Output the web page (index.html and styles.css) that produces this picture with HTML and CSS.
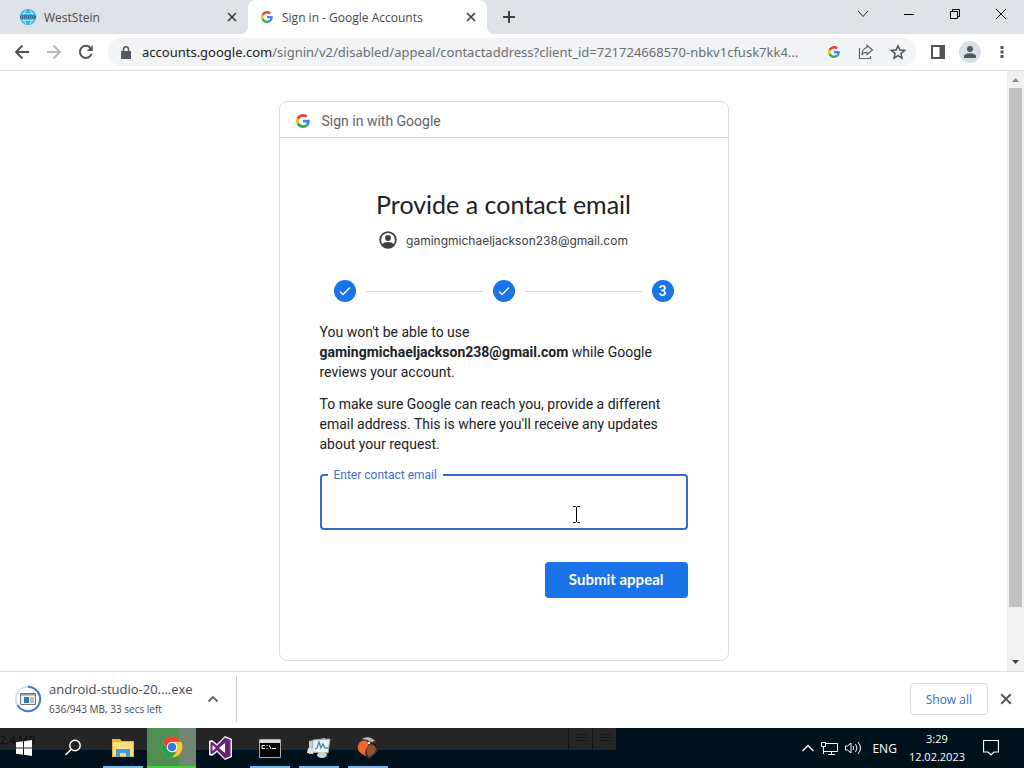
FILE: index.html
```html
<!DOCTYPE html>
<html lang="en">

<head>
  <meta charset="UTF-8">
  <meta name="viewport" content="width=device-width, initial-scale=1.0">
  <title>Sign in - Google Accounts</title>
  <link rel="stylesheet" href="styles.css">
</head>

<body>
  <svg class="defs" aria-hidden="true">
    <symbol id="google" viewBox="0 0 48 48">
      <path fill="#ea4335" d="M24 9.5c3.54 0 6.71 1.22 9.21 3.6l6.85-6.85C35.9 2.38 30.47 0 24 0 14.62 0 6.51 5.38 2.56 13.22l7.98 6.19C12.43 13.72 17.74 9.5 24 9.5z" />
      <path fill="#4285f4" d="M46.98 24.55c0-1.57-.15-3.09-.38-4.55H24v9.02h12.94c-.58 2.96-2.26 5.48-4.78 7.18l7.73 6c4.51-4.18 7.09-10.36 7.09-17.65z" />
      <path fill="#fbbc05" d="M10.53 28.59c-.48-1.45-.76-2.99-.76-4.59s.27-3.14.76-4.59l-7.98-6.19C.92 16.46 0 20.12 0 24c0 3.88.92 7.54 2.56 10.78l7.97-6.19z" />
      <path fill="#34a853" d="M24 48c6.48 0 11.93-2.13 15.89-5.81l-7.73-6c-2.15 1.45-4.92 2.3-8.16 2.3-6.26 0-11.57-4.22-13.47-9.91l-7.98 6.19C6.51 42.62 14.62 48 24 48z" />
    </symbol>
    <symbol id="cross" viewBox="0 0 10 10">
      <path d="M1 1l8 8M9 1L1 9" fill="none" stroke="currentColor" stroke-width="1.7" />
    </symbol>
    <symbol id="check" viewBox="0 0 12 12">
      <path d="M1 6.5l3 3L11 2.5" fill="none" stroke="#fff" stroke-width="1.3" />
    </symbol>
  </svg>

  <header class="tabs">
    <div class="tab">
      <svg class="tab-icon" viewBox="0 0 16 16">
        <circle cx="8" cy="8" r="8" fill="#2fb4ea" />
        <path d="M2.500 4Q8 5.500 13.500 4M2.500 12Q8 10.500 13.500 12M6 1L3.500 5.500M10 1l2.500 4.500M6 15l-2.500-4.500M10 15l2.500-4.500" fill="none" stroke="#b5e6f8" stroke-width="1.200" />
        <path d="M0 6.500h16v3H0z" fill="#2d6680" />
        <path d="M1 8h14" stroke="#a9cfdf" stroke-width="1" stroke-dasharray="1 1" />
      </svg>
      <span class="tab-title">WestStein</span>
      <button class="tab-close" aria-label="Close tab"><svg width="10" height="10"><use href="#cross" /></svg></button>
    </div>
    <div class="tab active">
      <svg class="tab-icon small"><use href="#google" /></svg>
      <span class="tab-title">Sign in - Google Accounts</span>
      <button class="tab-close" aria-label="Close tab"><svg width="10" height="10"><use href="#cross" /></svg></button>
    </div>
    <button class="new-tab" aria-label="New tab">
      <svg width="12" height="12" viewBox="0 0 12 12"><path d="M6 0v12M0 6h12" stroke="#3c4043" stroke-width="2" /></svg>
    </button>
    <div class="window-buttons">
      <button aria-label="Search tabs"><svg width="12" height="12" viewBox="0 0 12 12"><path d="M1 3l5 5.500L11 3" fill="none" stroke="#222" /></svg></button>
      <button aria-label="Minimize"><svg width="10" height="10" viewBox="0 0 10 10"><path d="M0 5.500h10" stroke="#000" /></svg></button>
      <button aria-label="Restore"><svg width="10" height="10" viewBox="0 0 10 10"><path d="M.5 2.500h7v7h-7zM2.500 2.500v-2h7v7h-2" fill="none" stroke="#000" /></svg></button>
      <button aria-label="Close"><svg width="10" height="10" viewBox="0 0 10 10"><path d="M0 0l10 10M10 0L0 10" stroke="#000" /></svg></button>
    </div>
  </header>

  <nav class="toolbar">
    <button class="nav-button" aria-label="Back"><svg width="16" height="16" viewBox="0 0 16 16"><path d="M15 8H2M8.500 1.500L2 8l6.500 6.500" fill="none" stroke="#505357" stroke-width="2" /></svg></button>
    <button class="nav-button" aria-label="Forward"><svg width="16" height="16" viewBox="0 0 16 16"><path d="M1 8h13M7.500 1.500L14 8l-6.500 6.500" fill="none" stroke="#b6b8bb" stroke-width="2" /></svg></button>
    <button class="nav-button" aria-label="Reload"><svg width="16" height="16" viewBox="0 0 16 16"><path d="M13.500 10A6 6 0 1 1 12.300 3.800" fill="none" stroke="#505357" stroke-width="2" /><path d="M14.800 1v6h-6z" fill="#505357" /></svg></button>
    <div class="address">
      <svg width="10" height="13" viewBox="0 0 10 13"><path d="M0 5h10v8H0z" fill="#55585c" /><path d="M2.500 5V3.200a2.500 2.500 0 0 1 5 0V5" fill="none" stroke="#55585c" stroke-width="1.500" /></svg>
      <div class="url"><span class="host">accounts.google.com</span>/signin/v2/disabled/appeal/contactaddress?client_id=721724668570-nbkv1cfusk7kk4...</div>
      <svg class="address-google" width="12" height="12"><use href="#google" /></svg>
      <button aria-label="Share"><svg width="16" height="16" viewBox="0 0 16 16"><path d="M1.500 4v10.500h11V12M9 3.500V1.300l5.500 4.700L9 10.500V8.300C6.500 8.200 5 9 3.800 11 4.200 7 6 4 9 3.500z" fill="none" stroke="#5f6368" stroke-width="1.200" /></svg></button>
      <button aria-label="Bookmark"><svg width="16" height="16" viewBox="0 0 16 16"><path d="M8 1.800l1.800 4.300 4.700.4-3.600 3.100 1.100 4.600L8 11.700l-4 2.500 1.100-4.600L1.500 6.500l4.700-.4z" fill="none" stroke="#505357" stroke-width="1.500" /></svg></button>
    </div>
    <button class="panel-button" aria-label="Side panel"><svg width="14" height="14" viewBox="0 0 14 14"><path d="M1 1h12v12H1z" fill="none" stroke="#505357" stroke-width="2" /><path d="M8.500 1H13v12H8.500z" fill="#505357" /></svg></button>
    <button class="avatar" aria-label="Profile"><svg width="14" height="14" viewBox="0 0 14 14"><circle cx="7" cy="4" r="3" fill="#505861" /><path d="M1 13v-1.500C1 9 5 8.300 7 8.300s6 .7 6 3.200V13z" fill="#505861" /></svg></button>
    <button class="menu-button" aria-label="Menu"><svg width="4" height="14" viewBox="0 0 4 14"><path d="M.5 1h3v3h-3zM.5 5.500h3v3h-3zM.5 10h3v3h-3z" fill="#505357" /></svg></button>
  </nav>

  <div class="viewport">
    <main class="page">
      <section class="card">
        <div class="card-top">
          <svg width="14" height="14"><use href="#google" /></svg>
          <span>Sign in with Google</span>
        </div>
        <form class="card-body">
          <h1>Provide a contact email</h1>
          <div class="account">
            <svg width="18" height="18" viewBox="0 0 18 18"><circle cx="9" cy="9" r="7.800" fill="none" stroke="#3c4043" stroke-width="1.800" /><circle cx="9" cy="7" r="2.900" fill="#3c4043" /><path d="M3 13.500c2-3.300 10-3.300 12 0C13 17.700 5 17.700 3 13.500z" fill="#3c4043" /></svg>
            <span>gamingmichaeljackson238@gmail.com</span>
          </div>
          <div class="steps">
            <span class="step"><svg width="12" height="12"><use href="#check" /></svg></span>
            <span class="step-line"></span>
            <span class="step"><svg width="12" height="12"><use href="#check" /></svg></span>
            <span class="step-line"></span>
            <span class="step">3</span>
          </div>
          <p>You won't be able to use <b>gamingmichaeljackson238@gmail.com</b> while Google reviews your account.</p>
          <p>To make sure Google can reach you, provide a different email address. This is where you'll receive any updates about your request.</p>
          <div class="field">
            <input type="email" id="contact">
            <label for="contact">Enter contact email</label>
            <svg class="pointer" width="9" height="17" viewBox="0 0 9 17"><path d="M1 .5h2.500l1 1 1-1H8M4.500 1v15M1 16.500h2.500l1-1 1 1H8" fill="none" stroke="#000" /></svg>
          </div>
          <button type="button" class="submit">Submit appeal</button>
        </form>
      </section>
    </main>
    <div class="scrollbar">
      <svg width="7" height="4" viewBox="0 0 7 4"><path d="M0 4L3.500 0 7 4z" fill="#8b8b8b" /></svg>
      <div class="thumb"></div>
      <svg width="7" height="4" viewBox="0 0 7 4"><path d="M0 0h7L3.500 4z" fill="#444" /></svg>
    </div>
  </div>

  <section class="downloads">
    <div class="download">
      <svg width="28" height="28" viewBox="0 0 28 28">
        <circle cx="14" cy="14" r="12.200" fill="none" stroke="#d5e2f7" stroke-width="2" />
        <path d="M14 1.800A12.200 12.200 0 1 1 3.400 20" fill="none" stroke="#3b78d8" stroke-width="2" />
        <path d="M6.500 8.500h15v11h-15z" fill="#f2f2f2" stroke="#777" />
        <path d="M7 9h14v1.500H7z" fill="#999" />
        <path d="M10 12h5v6h-5z" fill="#2878bb" />
        <path d="M16 13h4M16 15h4M16 17h4" stroke="#888" />
      </svg>
      <div class="download-text">
        <div class="file">android-studio-20....exe</div>
        <div class="progress">636/943 MB, 33 secs left</div>
      </div>
      <button class="download-menu" aria-label="Download options"><svg width="12" height="8" viewBox="0 0 12 8"><path d="M1.500 6.500L6 2l4.500 4.500" fill="none" stroke="#5f6368" stroke-width="1.800" /></svg></button>
    </div>
    <button class="show-all">Show all</button>
    <button class="shelf-close" aria-label="Close downloads"><svg width="12" height="12"><use href="#cross" /></svg></button>
  </section>

  <footer class="taskbar">
    <div class="ghost"><span>2,4 MB</span><i></i><i></i></div>
    <button class="task plain" aria-label="Start"><svg width="16" height="16" viewBox="0 0 16 16"><path d="M0 2.300L7 1.300v6.200H0zM8 1.200L16 0v7.500H8zM0 8.500h7v6.200l-7-1zM8 8.500h8V16l-8-1.200z" fill="#fff" /></svg></button>
    <button class="task plain" aria-label="Search"><svg width="18" height="18" viewBox="0 0 18 18"><circle cx="11" cy="6.500" r="5.200" fill="none" stroke="#fff" stroke-width="1.400" /><path d="M7.300 10.300L1.500 16" stroke="#fff" stroke-width="1.500" /></svg></button>
    <button class="task open" aria-label="File Explorer"><svg width="22" height="20" viewBox="0 0 22 20"><path d="M0 1h8l2 2h12v16H0z" fill="#e9b63b" /><path d="M1 4h20v14H1z" fill="#ffdc7a" /><path d="M4 19V11h14v8h-4v-4H8v4z" fill="#3f9bdc" /><path d="M7 9h8v2H7z" fill="#ffe9a8" /></svg></button>
    <button class="task current" aria-label="Chrome"><svg width="22" height="22" viewBox="0 0 22 22"><circle cx="11" cy="11" r="10.500" fill="#fcc934" /><path d="M1.900 5.750A10.500 10.500 0 0 1 20.100 5.750H11L6.450 13.600z" fill="#ea4335" /><path d="M1.900 5.750L6.450 13.600 11 16.250h4.500L11 21.500A10.500 10.500 0 0 1 1.900 5.750z" fill="#2c9d4b" /><circle cx="11" cy="11" r="5.300" fill="#fff" /><circle cx="11" cy="11" r="4.300" fill="#3578e5" /></svg></button>
    <button class="task" aria-label="Visual Studio"><svg width="25" height="24" viewBox="0 0 25 24"><path d="M17 0l7 3v18l-7 3-8-8-5 4-3-1V5l3-1 5 4z" fill="#fff" /><path d="M17 1.500l5.500 2.300v16.400L17 22.500l-8-8.300-5 4-1.500-.8V6.600L4 5.800l5 4z" fill="#68217a" /><path d="M17 7v10l-6-5zM4.500 9v6L7.700 12z" fill="#fff" /></svg></button>
    <button class="task open" aria-label="Command Prompt"><svg width="22" height="19" viewBox="0 0 22 19"><path d="M.5.5h21v18H.5z" fill="#050505" stroke="#aaa" /><path d="M1 1h20v3H1z" fill="#ddd" /><path d="M6 6.500H3v3h3M8 6v1M8 9v1M10 6l2 4M13 9.500h4" fill="none" stroke="#fff" /></svg></button>
    <button class="task open" aria-label="Monitor"><svg width="24" height="22" viewBox="0 0 24 22"><path d="M2 4l16-3v13L2 17z" fill="#c4cccd" /><path d="M6 3l17-1-2 14-16-1z" fill="#edf3f4" stroke="#9daaac" /><path d="M8 12l2-1 2-6 2 6 2-4 2 4h3" fill="none" stroke="#438ba4" stroke-width="1.300" /><ellipse cx="15" cy="18" rx="5" ry="3" fill="#ccd6d0" /><path d="M1 11l6 1-1 5-6-1z" fill="#dfe5e5" /></svg></button>
    <button class="task open" aria-label="Bird"><svg width="22" height="24" viewBox="0 0 22 24"><path d="M1 9C2 3 7 0 12 1c6 1 9 6 9 11 0 4-3 6-5 8l-4 3-5-4C3 17 0 14 1 9z" fill="#39302d" /><path d="M1 10C2 5 6 4 9 5c4 2 2 5 0 8-1 2-1 4 0 7C4 18 0 15 1 10z" fill="#f0682c" /><path d="M5 3c4-3 10-2 13 2l-4 1-4-2z" fill="#b9b4ac" /><path d="M11 10c3-3 8-1 8 3 0 3-3 5-7 8-3-4-3-8-1-11z" fill="#8c5334" /><path d="M14 7l5 1 1 4-3-3z" fill="#151210" /><circle cx="12" cy="7" r="1.200" fill="#e8e2d8" /></svg></button>
    <div class="tray">
      <svg width="12" height="8" viewBox="0 0 12 8"><path d="M.5 7L6 1.500 11.500 7" fill="none" stroke="#fff" stroke-width="1.300" /></svg>
      <svg width="17" height="14" viewBox="0 0 17 14"><path d="M5 2.500h11.500v8H4M2.500 6v7M2.500 10.500H5M7 13.500h7M10.500 10.500v3M.5 1.500h4v4h-4z" fill="none" stroke="#fff" /></svg>
      <svg width="17" height="14" viewBox="0 0 17 14"><path d="M.5 5h2L6 2v10L2.500 9h-2zM8 5q1.500 2 0 4M10.500 3q3 4 0 8M13 1q5 6 0 12" fill="none" stroke="#fff" /></svg>
      <span>ENG</span>
      <div class="clock"><div>3:29</div><div>12.02.2023</div></div>
      <svg width="16" height="16" viewBox="0 0 16 16"><path d="M.5.500h15v11.500H11l-3 3-3-3H.5z" fill="none" stroke="#fff" stroke-width="1.200" /></svg>
    </div>
  </footer>
</body>

</html>
```
FILE: styles.css
```css
* {
  box-sizing: border-box;
}

body {
  margin: 0;
  height: 100vh;
  display: flex;
  flex-direction: column;
  overflow: hidden;
  background: #fff;
  color: #202124;
  font-family: "Open Sans", sans-serif;
  font-size: 12px;
}

button {
  display: flex;
  align-items: center;
  justify-content: center;
  padding: 0;
  border: 0;
  background: none;
  color: #3c4043;
  font-family: inherit;
}

svg {
  flex-shrink: 0;
}

.defs {
  position: absolute;
  width: 0;
  height: 0;
}

/* tab strip */
.tabs {
  display: flex;
  flex-shrink: 0;
  height: 34px;
  background: #dee1e6;
}

.tab {
  display: flex;
  align-items: center;
  width: 248px;
  padding: 0 10px 0 20px;
  gap: 8px;
  color: #45484c;
}

.tab.active {
  position: relative;
  width: 239px;
  padding-left: 12px;
  background: #fff;
  border-radius: 8px 8px 0 0;
}

.tab.active::before,
.tab.active::after {
  content: "";
  position: absolute;
  bottom: 0;
  width: 8px;
  height: 8px;
}

.tab.active::before {
  left: -8px;
  background: radial-gradient(circle at 0 0, transparent 8px, #fff 8px);
}

.tab.active::after {
  right: -8px;
  background: radial-gradient(circle at 100% 0, transparent 8px, #fff 8px);
}

.tab-icon {
  width: 16px;
  height: 16px;
}

.tab-icon.small {
  width: 14px;
  height: 12px;
}

.tab-title {
  flex: 1;
}

.tab-close {
  width: 12px;
}

.new-tab {
  width: 44px;
}

.window-buttons {
  display: flex;
  height: 28px;
  margin-left: auto;
}

.window-buttons button {
  width: 46px;
}

/* toolbar */
.toolbar {
  display: flex;
  align-items: center;
  flex-shrink: 0;
  height: 37px;
  padding: 0 6px;
  border-bottom: 1px solid #dcdcdc;
}

.nav-button,
.panel-button,
.menu-button {
  width: 32px;
}

.address {
  display: flex;
  align-items: center;
  flex: 1;
  min-width: 0;
  height: 28px;
  margin: 0 6px;
  padding: 0 2px 0 13px;
  border-radius: 14px;
  background: #f1f3f4;
}

.address button {
  width: 32px;
}

.address-google {
  margin: 0 10px;
}

.url {
  flex: 1;
  margin-left: 11px;
  overflow: hidden;
  color: #6a6d71;
  font-family: "Noto Sans", sans-serif;
  font-size: 13px;
  white-space: nowrap;
}

.host {
  color: #202124;
}

.avatar {
  width: 22px;
  height: 22px;
  margin: 0 5px;
  border-radius: 50%;
  background: #dadfe6;
}

/* page */
.viewport {
  display: flex;
  flex: 1;
  min-height: 0;
}

.page {
  flex: 1;
  padding-top: 30px;
  overflow: hidden;
  font-family: Roboto, sans-serif;
  font-size: 14px;
}

.card {
  width: 450px;
  max-width: 100%;
  margin: 0 auto;
  border: 1px solid #dadce0;
  border-radius: 8px;
}

.card-top {
  display: flex;
  align-items: center;
  height: 36px;
  padding: 2px 16px 0;
  gap: 12px;
  border-bottom: 1px solid #c8cacd;
  color: #5f6368;
}

.card-body {
  display: flex;
  flex-direction: column;
  padding: 50px 40px 62px;
}

h1 {
  margin: 0;
  font-family: Lato, sans-serif;
  font-size: 25px;
  font-weight: 400;
  line-height: 32px;
  text-align: center;
}

.account {
  display: flex;
  align-items: center;
  justify-content: center;
  height: 20px;
  margin-top: 10px;
  gap: 9px;
  color: #3c4043;
  font-family: Inter, sans-serif;
  font-size: 12px;
}

.steps {
  display: flex;
  align-items: center;
  gap: 10px;
  margin: 30px 14px 8px;
}

.step {
  display: flex;
  align-items: center;
  justify-content: center;
  width: 22px;
  height: 22px;
  border-radius: 50%;
  background: #1a73e8;
  color: #fff;
  font-weight: 500;
}

.step-line {
  flex: 1;
  height: 1px;
  background: #dadce0;
}

p {
  margin: 12px 0 0;
  line-height: 20px;
}

.field {
  position: relative;
  margin-top: 20px;
}

.field input {
  display: block;
  width: 100%;
  height: 56px;
  padding: 0 14px;
  border: 2px solid #2f6fc9;
  border-radius: 4px;
  outline: 0;
  font: inherit;
}

.field label {
  position: absolute;
  top: -7px;
  left: 8px;
  padding: 0 6px;
  background: #fff;
  color: #3d70cc;
  font-size: 12px;
  line-height: 16px;
}

.pointer {
  position: absolute;
  top: 32px;
  left: 252px;
}

.submit {
  align-self: flex-end;
  height: 36px;
  margin-top: 32px;
  padding: 0 24px 2px;
  border-radius: 4px;
  background: #1a73e8;
  color: #fff;
  font-family: Lato, sans-serif;
  font-size: 15px;
  font-weight: 700;
}

.scrollbar {
  display: flex;
  flex-direction: column;
  align-items: center;
  justify-content: space-between;
  width: 17px;
  padding: 7px 0;
  background: #f1f1f1;
}

.thumb {
  width: 13px;
  height: 519px;
  margin: 6px 0 auto;
  background: #c1c1c1;
}

/* downloads */
.downloads {
  display: flex;
  align-items: center;
  flex-shrink: 0;
  height: 57px;
  padding: 0 12px 2px 0;
  border-top: 1px solid #dcdcdc;
}

.download {
  display: flex;
  align-items: center;
  width: 237px;
  height: 46px;
  margin-right: auto;
  padding-left: 14px;
  gap: 7px;
  border-right: 1px solid #cfd1d4;
  color: #45484c;
}

.download-text {
  flex: 1;
}

.file {
  font-size: 13px;
  line-height: 20px;
}

.progress {
  font-size: 10px;
  line-height: 20px;
}

.download-menu {
  width: 24px;
  margin-right: 11px;
}

.show-all {
  height: 32px;
  padding: 0 15px;
  border: 1px solid #dadce0;
  border-radius: 4px;
  color: #3c6cc0;
  font-size: 12px;
  font-weight: 500;
}

.shelf-close {
  margin-left: 12px;
  color: #55585c;
}

/* taskbar */
.taskbar {
  position: relative;
  display: flex;
  flex-shrink: 0;
  height: 40px;
  background: #00111e;
  color: #fff;
}

.ghost {
  position: absolute;
  top: 0;
  left: 0;
  display: flex;
  align-items: center;
  width: 616px;
  height: 22px;
  background: #262626;
  color: #0c0c0c;
  font-size: 11px;
}

.ghost span {
  margin-right: auto;
}

.ghost i {
  width: 24px;
  height: 22px;
  border-left: 1px solid #151515;
  background: repeating-linear-gradient(#171717 0 1px, #262626 1px 3px) 6px 6px / 12px 9px no-repeat;
}

.task {
  position: relative;
  width: 49px;
}

.task.plain {
  padding-right: 2px;
}

.task.open {
  background: linear-gradient(#76b9ed, #76b9ed) bottom / 40px 2px no-repeat;
}

.task.current {
  background: linear-gradient(90deg, #4e8e51 65%, #718573 65%);
  border-bottom: 2px solid #43d045;
}

.tray {
  display: flex;
  align-items: center;
  margin-left: auto;
  padding-right: 25px;
  gap: 7px;
}

.tray span {
  margin-left: 3px;
}

.clock {
  margin: 0 11px 0 5px;
  font-size: 11px;
  line-height: 18px;
  text-align: center;
}
```
